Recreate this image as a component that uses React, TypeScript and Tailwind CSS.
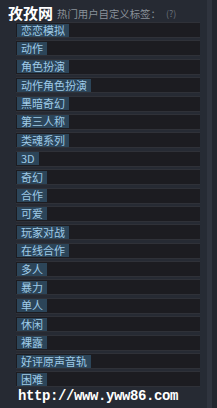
const tags = [
  '恋恋模拟',
  '动作',
  '角色扮演',
  '动作角色扮演',
  '黑暗奇幻',
  '第三人称',
  '类魂系列',
  '3D',
  '奇幻',
  '合作',
  '可爱',
  '玩家对战',
  '在线合作',
  '多人',
  '暴力',
  '单人',
  '休闲',
  '裸露',
  '好评原声音轨',
  '困难',
];

const cjk = "font-['Noto_Sans_CJK_SC','Noto_Sans',sans-serif]";

export default function App() {
  return (
    <div className="relative w-[217px] h-[408px] overflow-hidden bg-[#262a33] flex">
      <div className="w-[200px] flex flex-col">
        <div className={`h-[22px] pl-[57px] pt-[7px] flex items-start gap-[5px] text-[10.4px] leading-[14px] text-[#8a9199] ${cjk}`}>
          <span className="whitespace-nowrap">热门用户自定义标签：</span>
          <span className="text-[9px] text-[#6b737c]">(?)</span>
        </div>
        <div className="pl-[16px] flex flex-col gap-[2.4px]">
          {tags.map((tag) => (
            <div key={tag} className="h-[16px] bg-[#1c1c21] border-y border-[#2f3138] flex items-center">
              <span className={`ml-[1px] h-[13px] px-[4px] bg-[#2c4559] text-[#9fcbe8] text-[11px] leading-[13px] whitespace-nowrap ${cjk}`}>
                {tag}
              </span>
            </div>
          ))}
        </div>
      </div>
      <div className="w-[7px] bg-[#262b34]" />
      <div className="w-[5px] bg-[#2f343e]" />
      <div className="w-[5px] bg-[#22262e]" />

      <div className="absolute left-[8px] top-[5px] text-[15px] leading-[15px] font-bold text-white font-['Noto_Sans_CJK_SC',serif]">
        孜孜网
      </div>
      <div className="absolute left-[18px] top-[388px] text-[14px] leading-[16px] font-bold text-white font-['Liberation_Mono',monospace] tracking-[-0.4px]">
        http://www.yww86.com
      </div>
    </div>
  );
}
